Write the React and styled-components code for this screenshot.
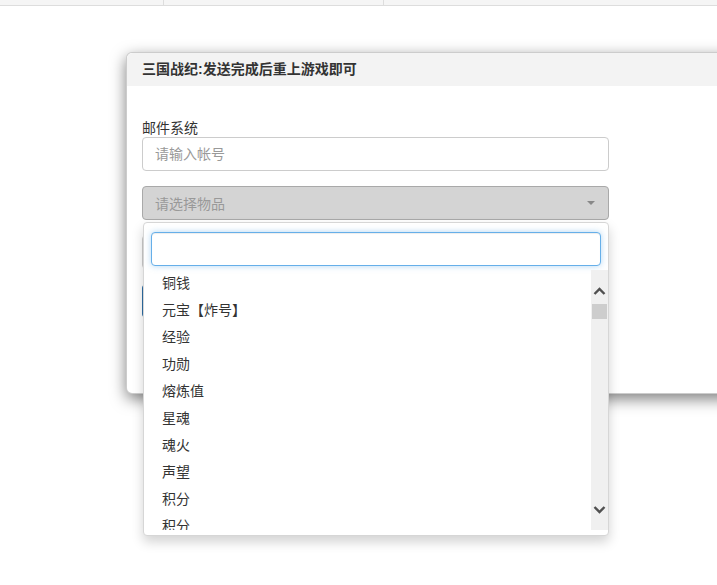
import React from 'react';
import styled, { createGlobalStyle } from 'styled-components';

const GlobalStyle = createGlobalStyle`
  html, body {
    margin: 0;
    padding: 0;
    background: #fff;
    overflow: hidden;
  }
  body {
    font-family: "Liberation Sans", "Noto Sans CJK SC", sans-serif;
    font-size: 14px;
    color: #333;
  }
  * {
    box-sizing: border-box;
  }
`;

const Page = styled.div`
  width: 717px;
  height: 585px;
  overflow: hidden;
`;

const TopBar = styled.div`
  display: flex;
  height: 6px;
  background: #f5f5f5;
  border-bottom: 1px solid #ddd;
`;

const TopCell = styled.div`
  width: ${(p) => p.w}px;
  border-right: 1px solid #ddd;
`;

const Modal = styled.div`
  margin: 46px 0 0 126px;
  width: 620px;
  background: #fff;
  border: 1px solid rgba(0, 0, 0, 0.2);
  border-radius: 6px;
  box-shadow: 0 5px 15px rgba(0, 0, 0, 0.5);
`;

const Header = styled.div`
  height: 33px;
  line-height: 33px;
  padding: 0 15px;
  background: #f3f3f3;
  border-radius: 6px 6px 0 0;
  font-size: 14px;
  font-weight: bold;
  color: #333;
`;

const Body = styled.div`
  padding: 33px 15px 75px;
  width: 497px;
  display: flex;
  flex-direction: column;
`;

const Label = styled.label`
  display: block;
  line-height: 18px;
  font-size: 14px;
`;

const Input = styled.input`
  display: block;
  width: 100%;
  height: 34px;
  margin-top: ${(p) => p.gap || 0}px;
  padding: 0 12px;
  border: 1px solid #ccc;
  border-radius: 4px;
  font: inherit;
  color: #555;
  outline: none;

  &::placeholder {
    color: #999;
  }
`;

const SelectWrap = styled.div`
  position: relative;
  margin-top: 15px;
  z-index: 2;
`;

const SelectBox = styled.div`
  display: flex;
  align-items: center;
  justify-content: space-between;
  height: 34px;
  padding: 0 12px;
  background: #d4d4d4;
  border: 1px solid #a9a9a9;
  border-radius: 4px;
  color: #999;
`;

const Caret = styled.span`
  width: 0;
  height: 0;
  margin-right: 1px;
  border-left: 4px solid transparent;
  border-right: 4px solid transparent;
  border-top: 4px solid #888;
`;

const Dropdown = styled.div`
  position: absolute;
  top: calc(100% + 2px);
  left: 1px;
  right: 0;
  background: #fff;
  border: 1px solid #d6d6d6;
  border-radius: 4px;
  box-shadow: 0 6px 12px rgba(0, 0, 0, 0.175);
  padding-bottom: 5px;
`;

const SearchRow = styled.div`
  padding: 9px 7px 4px 7px;
`;

const Search = styled.input`
  display: block;
  width: 100%;
  height: 34px;
  border: 1px solid #66afe9;
  border-radius: 4px;
  box-shadow: inset 0 1px 1px rgba(0, 0, 0, 0.075), 0 0 6px rgba(102, 175, 233, 0.5);
  outline: none;
  font: inherit;
  padding: 0 12px;
`;

const ListArea = styled.div`
  display: flex;
  height: 260px;
`;

const Items = styled.ul`
  flex: 1;
  margin: 0;
  padding: 0;
  list-style: none;
  overflow: hidden;
`;

const Item = styled.li`
  height: 27px;
  line-height: 27px;
  padding: 0 18px;
  font-size: 14px;
  color: #333;
  white-space: nowrap;
`;

const ScrollBar = styled.div`
  width: 17px;
  display: flex;
  flex-direction: column;
  background: #f0f0f0;
  padding: 13px 0 12px;
`;

const ScrollButton = styled.div`
  height: 17px;
  display: flex;
  align-items: center;
  justify-content: center;
`;

const Thumb = styled.div`
  height: 15px;
  margin: 4px 1px 0;
  background: #cdcdcd;
`;

const Spacer = styled.div`
  flex: 1;
`;

const SendButton = styled.button`
  display: block;
  width: 100%;
  height: 34px;
  margin-top: 15px;
  background: #337ab7;
  border: 1px solid #2e6da4;
  border-radius: 4px;
  color: #fff;
  font: inherit;
`;

const Chevron = ({ down }) => (
  <svg width="13" height="9" viewBox="0 0 13 9">
    <path
      d={down ? 'M1.5 2 L6.5 7 L11.5 2' : 'M1.5 7 L6.5 2 L11.5 7'}
      fill="none"
      stroke="#505050"
      strokeWidth="2.4"
    />
  </svg>
);

const items = ['铜钱', '元宝【炸号】', '经验', '功勋', '熔炼值', '星魂', '魂火', '声望', '积分', '积分'];

const App = () => {
  return (
    <Page>
      <GlobalStyle />
      <TopBar>
        <TopCell w={164} />
        <TopCell w={220} />
      </TopBar>
      <Modal>
        <Header>三国战纪:发送完成后重上游戏即可</Header>
        <Body>
          <Label>邮件系统</Label>
          <Input placeholder="请输入帐号" />
          <SelectWrap>
            <SelectBox>
              <span>请选择物品</span>
              <Caret />
            </SelectBox>
            <Dropdown>
              <SearchRow>
                <Search />
              </SearchRow>
              <ListArea>
                <Items>
                  {items.map((it, i) => (
                    <Item key={i}>{it}</Item>
                  ))}
                </Items>
                <ScrollBar>
                  <ScrollButton>
                    <Chevron />
                  </ScrollButton>
                  <Thumb />
                  <Spacer />
                  <ScrollButton>
                    <Chevron down />
                  </ScrollButton>
                </ScrollBar>
              </ListArea>
            </Dropdown>
          </SelectWrap>
          <Input gap={15} placeholder="请输入数量" />
          <SendButton>发送</SendButton>
        </Body>
      </Modal>
    </Page>
  );
};

export default App;
